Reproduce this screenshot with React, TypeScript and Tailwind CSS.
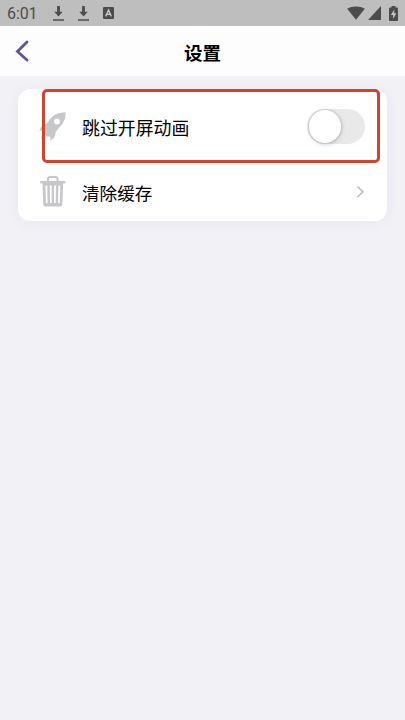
function StatusBar() {
  return (
    <div className="flex h-[26px] items-center bg-[#bebebe] pl-[7px] pr-[7px] text-[#4c4c4c]">
      <span className="w-[46px] pt-px font-[Roboto,sans-serif] text-[16px] leading-[26px] tracking-[-0.1px]">6:01</span>
      <DownloadIcon />
      <span className="w-[14px]" />
      <DownloadIcon />
      <span className="w-[14px]" />
      <svg width="11" height="12" viewBox="0 0 11 12">
        <rect width="11" height="12" rx="1" fill="currentColor" />
        <path d="M2.7 9.4 5.5 3l2.8 6.4M3.8 7.3h3.4" fill="none" stroke="#c6c6c6" strokeWidth="1.4" />
      </svg>
      <svg className="ml-auto" width="18" height="14" viewBox="0 0 18 14">
        <path d="M0.2 2.8C5.200-.4 12.800-.4 17.800 2.800L9 13.800Z" fill="currentColor" />
      </svg>
      <svg className="ml-[3px]" width="13" height="14" viewBox="0 0 13 14">
        <path d="M13 0v14H0Z" fill="currentColor" />
      </svg>
      <svg className="ml-[8px]" width="9" height="15" viewBox="0 0 9 15">
        <path d="M2.500 0h4v1.500H8q1 0 1 1V14q0 1-1 1H1q-1 0-1-1V2.500q0-1 1-1h1.500Z" fill="currentColor" />
        <path d="M5.200 3.500 1.900 9h2.200v4l3.200-5.700H5.200Z" fill="#c6c6c6" />
      </svg>
    </div>
  );
}

function DownloadIcon() {
  return (
    <svg width="11" height="15" viewBox="0 0 11 15">
      <path d="M4.100 0h2.800v5.700h2.800L5.500 10.500 1.300 5.700h2.800ZM0 13.200h11v1.600H0Z" fill="currentColor" />
    </svg>
  );
}

function RocketIcon() {
  return (
    <svg width="27" height="29" viewBox="0 0 27 29">
      <path
        fillRule="evenodd"
        d="M26.700.2C20 .5 14.600 2.600 11.200 6.800L7.800 11.500C3.700 12.300 1.600 15 .3 19.200c1.800-.9 3.300-1.100 4.700-.7l-.6 3.200 3.800 3 2.900-.2c.5 1.400.4 2.700-.2 4.200 3.700-1.500 5.800-4.200 5.700-8.700l3.800-4.700C24.700 11.500 26.500 6.500 26.700.2ZM18 6.600a2.900 2.900 0 1 1 0 5.800 2.900 2.900 0 0 1 0-5.800Z"
        fill="#c7c7ca"
      />
      <path d="M4.300 22.500C2.800 23 2.300 24.500 2.200 27c2.300-.2 4.400-.6 4.900-2.200L5.500 25Z" fill="#c7c7ca" />
    </svg>
  );
}

function TrashIcon() {
  return (
    <svg width="26" height="31" viewBox="0 0 26 31" fill="none" stroke="#c7c7ca">
      <path d="M8 5.500V3q0-2 2-2h5.500q2 0 2 2v2.500" strokeWidth="2" />
      <path d="M.3 6.200h25" strokeWidth="2.600" />
      <path
        fillRule="evenodd"
        stroke="none"
        fill="#c7c7ca"
        d="M2.500 7h20.600l-.7 21.500q-.1 2-2.100 2H5.300q-2 0-2.100-2ZM5.400 9.500l.5 17.500h1.700l-.3-17.500ZM9.800 9.500l.2 17.500h1.700V9.500ZM14 9.500v17.500h1.700l.2-17.500ZM18.400 9.500l-.3 17.500h1.700l.5-17.500Z"
      />
    </svg>
  );
}

export default function App() {
  return (
    <div className="relative h-[720px] w-[405px] overflow-hidden bg-[#f1f1f6] font-['Noto_Sans_CJK_SC',sans-serif] text-black">
      <StatusBar />
      <header className="flex h-[50px] items-center bg-[#fdfdfd] pl-[15px]">
        <svg width="15" height="22" viewBox="0 0 15 22">
          <path d="M12 2 2.500 11.500 12 20" fill="none" stroke="#62509b" strokeWidth="2.800" strokeLinecap="round" strokeLinejoin="miter" />
        </svg>
        <h1 className="ml-[154px] pt-[2px] text-[18.500px] font-bold leading-[28px]">设置</h1>
      </header>
      <main className="ml-[18px] mt-[13px] h-[132px] w-[369px] rounded-[12px] bg-white shadow-[0_2px_14px_rgba(60,60,90,0.05)]">
        <div className="flex h-[73px] items-center pl-[21px] pr-[22px] pt-[2px]">
          <RocketIcon />
          <span className="ml-[16px] text-[17.900px] leading-[26px]">跳过开屏动画</span>
          <div className="ml-auto flex h-[35px] w-[58px] items-center rounded-full bg-[#e9e9ea] pl-[1.500px]">
            <div className="size-[32.500px] rounded-full bg-white shadow-[0_0_2px_1px_rgba(0,0,0,0.12),1px_2px_5px_rgba(0,0,0,0.12)]" />
          </div>
        </div>
        <div className="flex h-[59px] items-center pl-[22px] pr-[22px]">
          <TrashIcon />
          <span className="ml-[16px] pt-[2px] text-[17.600px] leading-[26px]">清除缓存</span>
          <svg className="ml-auto" width="10" height="14" viewBox="0 0 10 14">
            <path d="m2.500 1.500 5.500 5.300-5.500 5.200" fill="none" stroke="#bdbdbf" strokeWidth="1.600" />
          </svg>
        </div>
      </main>
      <div className="absolute left-[42px] top-[89px] h-[74px] w-[338px] rounded-[5px] border-[3px] border-[#d4412d]" />
    </div>
  );
}
